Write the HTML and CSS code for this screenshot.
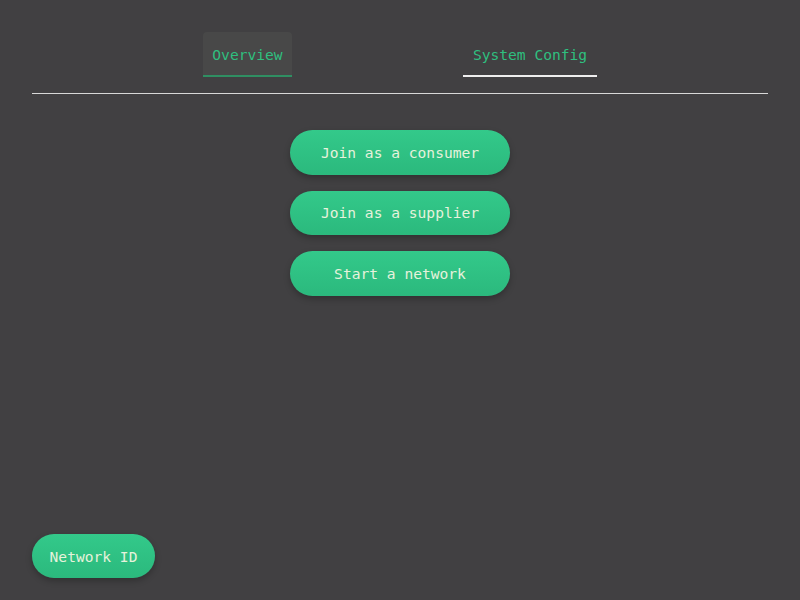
FILE: index.html
```html
<!DOCTYPE html>
<html>
<head>
<meta charset="utf-8">
<link rel="stylesheet" href="styles.css">
</head>
<body>
<div class="app">
  <nav class="tabs">
    <div class="tab tab-active">Overview</div>
    <div class="tab tab-underlined">System Config</div>
  </nav>
  <main class="actions">
    <button class="pill">Join as a consumer</button>
    <button class="pill">Join as a supplier</button>
    <button class="pill">Start a network</button>
  </main>
  <footer class="footer">
    <button class="pill pill-small">Network ID</button>
  </footer>
</div>
</body>
</html>
```
FILE: styles.css
```css
html, body {
  margin: 0;
  padding: 0;
  height: 100%;
  background: #414042;
}
body {
  font-family: "DejaVu Sans Mono", "Liberation Mono", monospace;
  font-size: 14.6px;
}
.app {
  box-sizing: border-box;
  height: 100vh;
  padding: 32px 32px 22px;
  display: flex;
  flex-direction: column;
}
.tabs {
  display: flex;
  justify-content: space-evenly;
  padding-bottom: 16px;
  border-bottom: 1px solid #d8d8d8;
}
.tab {
  box-sizing: border-box;
  height: 45px;
  padding: 2px 10px 0;
  display: flex;
  align-items: center;
  color: #2fbf7f;
  border-bottom: 2px solid transparent;
  border-radius: 4px 4px 0 0;
}
.tab-active {
  background: #484848;
  border-bottom-color: #2f8f62;
  padding: 2px 9.5px 0;
}
.tab-underlined {
  border-bottom-color: #eeeeee;
}
.actions {
  display: flex;
  flex-direction: column;
  align-items: center;
  gap: 16px;
  padding-top: 36px;
  flex: 1;
}
.pill {
  font-family: inherit;
  font-size: inherit;
  border: none;
  border-radius: 999px;
  height: 44.5px;
  width: 220px;
  color: #e6f2dc;
  background: linear-gradient(#33c98a, #2bb97d);
  box-shadow: 0 3px 6px rgba(0, 0, 0, 0.25);
  padding: 0;
  cursor: pointer;
}
.footer {
  display: flex;
}
.pill-small {
  width: 123px;
  height: 44px;
}
```
